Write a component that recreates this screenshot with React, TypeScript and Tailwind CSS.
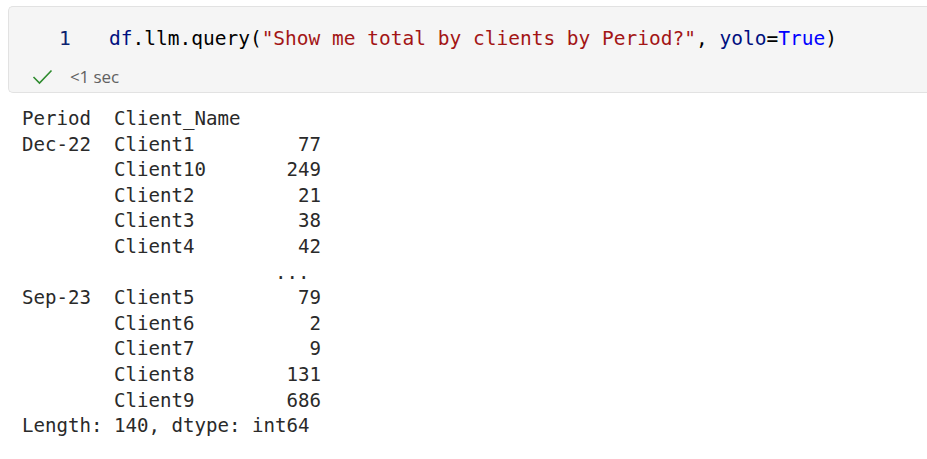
import React from "react";

const codeFont = { fontFamily: '"DejaVu Sans Mono", "Liberation Mono", monospace' };

const output = `Period  Client_Name
Dec-22  Client1         77
        Client10       249
        Client2         21
        Client3         38
        Client4         42
                      ... 
Sep-23  Client5         79
        Client6          2
        Client7          9
        Client8        131
        Client9        686
Length: 140, dtype: int64`;

export default function App() {
  return (
    <div className="w-[927px] h-[459px] bg-white overflow-hidden pt-[6px]">
      <div className="ml-[8px] h-[87px] border border-r-0 border-[#e2e2e2] rounded-l-[5px] bg-[#f5f5f5] flex flex-col">
        <div
          className="flex items-center h-[44px] pt-[20px] text-[19.5px] leading-[24px] whitespace-pre"
          style={codeFont}
        >
          <span className="w-[50px] ml-[50px] text-[#0b216f]">1</span>
          <span>
            <span className="text-[#001080]">df</span>
            <span className="text-[#000000]">.llm.query(</span>
            <span className="text-[#a31515]">"Show me total by clients by Period?"</span>
            <span className="text-[#000000]">, </span>
            <span className="text-[#001080]">yolo</span>
            <span className="text-[#000000]">=</span>
            <span className="text-[#0000ff]">True</span>
            <span className="text-[#000000]">)</span>
          </span>
        </div>
        <div className="flex items-center h-[40px] pt-[11px]">
          <svg width="21" height="16" viewBox="0 0 21 16" className="ml-[23px]">
            <polyline
              points="1.5,8 7.5,14 19.5,1.5"
              fill="none"
              stroke="#2e8b2e"
              strokeWidth="1.6"
            />
          </svg>
          <span
            className="ml-[17px] text-[17px] text-[#616161] tracking-[-0.1px]"
            style={{ fontFamily: '"Open Sans", "Noto Sans", sans-serif' }}
          >
            &lt;1 sec
          </span>
        </div>
      </div>
      <pre
        className="mt-[13px] pl-[22px] text-[19.1px] leading-[25.6px] text-[#2a2a2a]"
        style={codeFont}
      >
        {output}
      </pre>
    </div>
  );
}
